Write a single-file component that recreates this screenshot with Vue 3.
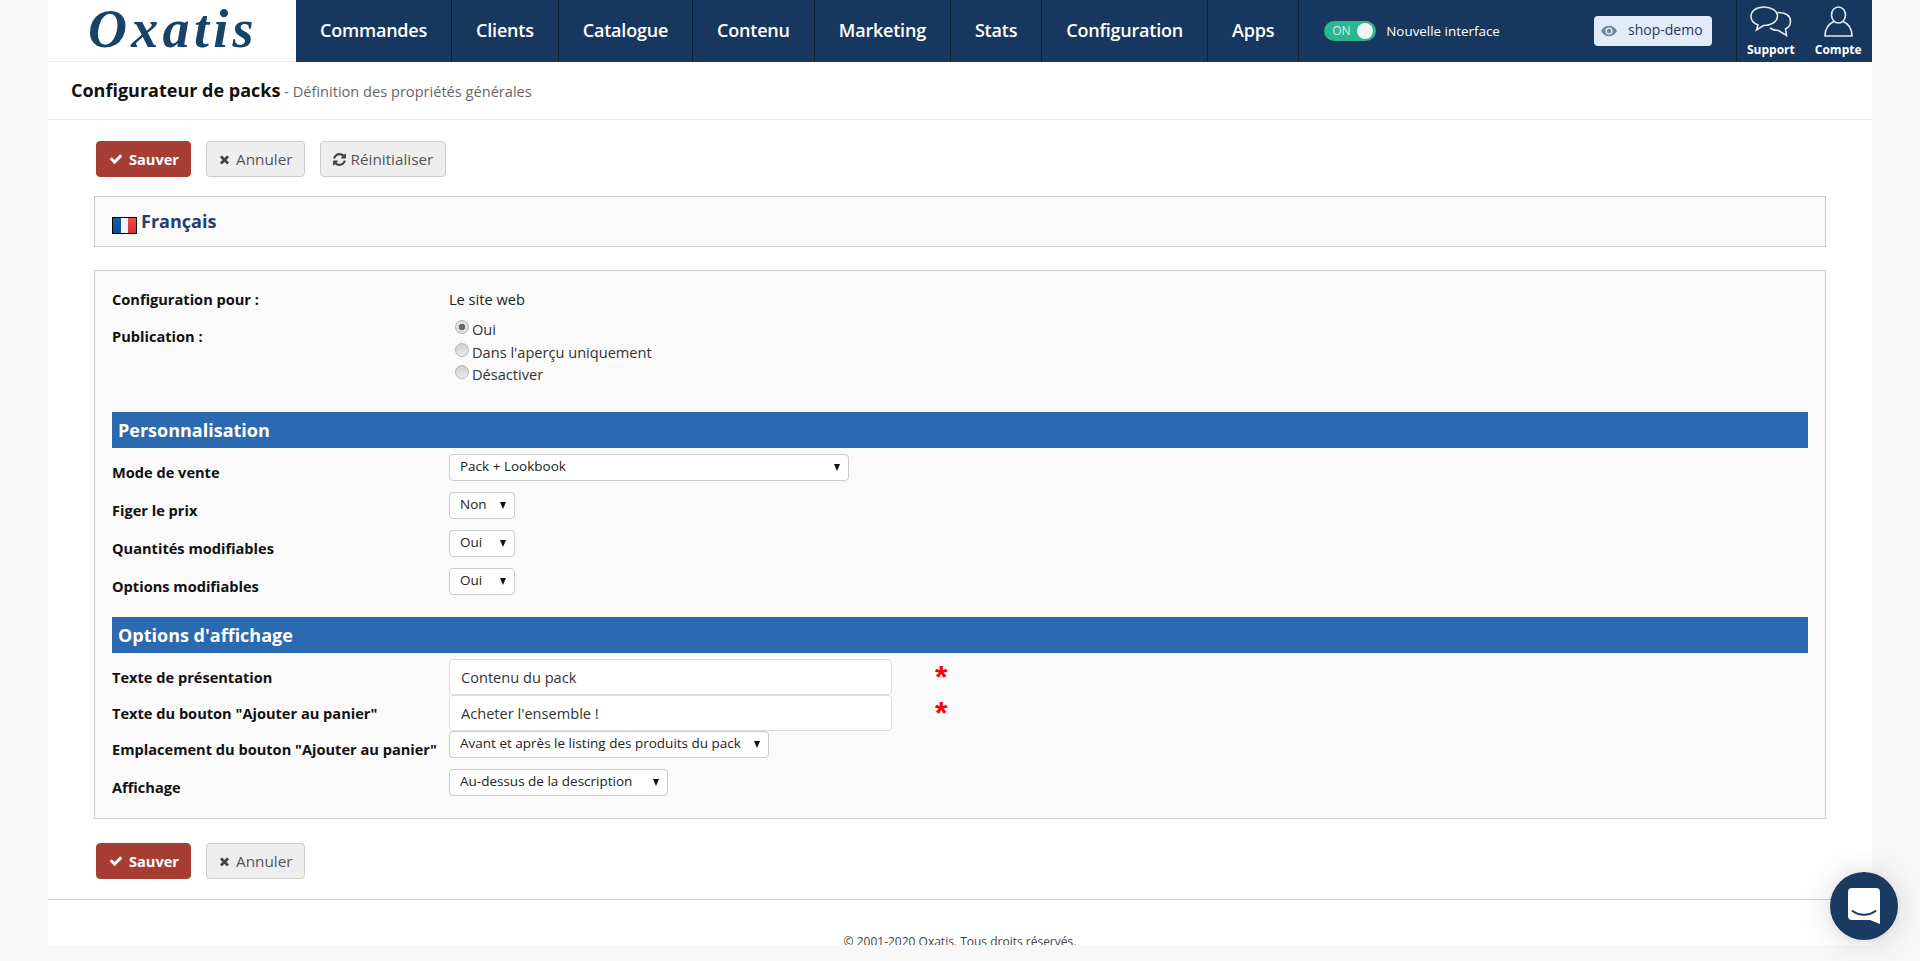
<template>
    <div class="page">
        <header class="topbar">
            <a class="logo">Oxatis</a>
            <nav class="nav">
                <a v-for="item in navItems" :key="item" class="nav-item">{{ item }}</a>
            </nav>
            <div class="tools">
                <span class="toggle"><span class="toggle-on">ON</span><span class="toggle-knob"></span></span>
                <span class="toggle-label">Nouvelle interface</span>
                <a class="shop">
                    <svg class="shop-eye" viewBox="0 0 16 12">
                        <path d="M0 6C2 2.4 4.800 .8 8 .8s6 1.600 8 5.200c-2 3.600-4.800 5.200-8 5.200S2 9.600 0 6z" fill="#6f85a3" />
                        <circle cx="8" cy="6" r="3.600" fill="#e2ebf7" />
                        <circle cx="8" cy="6" r="2.200" fill="#6f85a3" />
                    </svg>
                    shop-demo
                </a>
            </div>
            <div class="account">
                <a class="account-item">
                    <svg class="account-icon support-icon" viewBox="0 0 42 31" fill="none" stroke="#e4e9ef" stroke-width="1.600">
                        <path d="M14 1C6.500 1 1 5 1 10.500c0 4 3 7 7 8.500l-1.500 5 7-4.500c1.500 0 3 0 4.500-.4 6-1.400 9.500-5 9.500-9C27.500 5 21.500 1 14 1z" />
                        <path d="M27.500 6.500c7 0 13 2.500 13 9 0 3.500-2 6-5 7.500l1 6.500-8-5c-3 0-6-.6-8.500-2.500" />
                    </svg>
                    Support
                </a>
                <a class="account-item">
                    <svg class="account-icon user-icon" viewBox="0 0 29 31" fill="none" stroke="#e4e9ef" stroke-width="1.600">
                        <ellipse cx="14.500" cy="9" rx="7" ry="8" />
                        <path d="M10 15.500C5 17.500 1 22 1 30h27c0-8-4-12.500-9-14.500" />
                    </svg>
                    Compte
                </a>
            </div>
        </header>

        <div class="title-bar">
            <span class="title">Configurateur de packs</span>
            <span class="subtitle"> - Définition des propriétés générales</span>
        </div>

        <main class="content">
            <div class="actions">
                <button class="btn btn-save">
                    <svg class="btn-icon" viewBox="0 0 1792 1792"><path :d="icons.check" /></svg>Sauver
                </button>
                <button class="btn">
                    <svg class="btn-icon" viewBox="0 0 1792 1792"><path :d="icons.times" /></svg>Annuler
                </button>
                <button class="btn btn-reset">
                    <svg class="btn-icon" viewBox="0 0 1792 1792"><path :d="icons.refresh" /></svg>Réinitialiser
                </button>
            </div>

            <div class="lang-box">
                <span class="flag"><i class="flag-blue"></i><i class="flag-white"></i><i class="flag-red"></i></span>
                <span class="lang-name">Français</span>
            </div>

            <form class="form-box" @submit.prevent>
                <div class="row row-first">
                    <label class="label">Configuration pour :</label>
                    <span class="value">Le site web</span>
                </div>
                <div class="row row-auto">
                    <label class="label">Publication :</label>
                    <div class="radios">
                        <label v-for="option in publishOptions" :key="option" class="radio">
                            <input type="radio" name="publication" :value="option" v-model="publication">
                            <span>{{ option }}</span>
                        </label>
                    </div>
                </div>

                <h2 class="section section-first">Personnalisation</h2>
                <div v-for="field in saleFields" :key="field.label" class="row">
                    <label class="label">{{ field.label }}</label>
                    <div class="select" :class="field.size">
                        <select><option>{{ field.value }}</option></select>
                    </div>
                </div>

                <h2 class="section">Options d'affichage</h2>
                <div v-for="field in textFields" :key="field.label" class="row row-input">
                    <label class="label">{{ field.label }}</label>
                    <div class="input-wrap">
                        <input class="text-input" type="text" :value="field.value">
                        <span class="required">*</span>
                    </div>
                </div>
                <div v-for="field in displayFields" :key="field.label" class="row">
                    <label class="label">{{ field.label }}</label>
                    <div class="select" :class="field.size">
                        <select><option>{{ field.value }}</option></select>
                    </div>
                </div>
            </form>

            <div class="actions actions-bottom">
                <button class="btn btn-save">
                    <svg class="btn-icon" viewBox="0 0 1792 1792"><path :d="icons.check" /></svg>Sauver
                </button>
                <button class="btn">
                    <svg class="btn-icon" viewBox="0 0 1792 1792"><path :d="icons.times" /></svg>Annuler
                </button>
            </div>
        </main>

        <footer class="footer">© 2001-2020 Oxatis. Tous droits réservés.</footer>

        <button class="chat">
            <svg viewBox="0 0 32 36" width="32" height="36">
                <path d="M4 0h24a4 4 0 0 1 4 4v32l-10-4H4a4 4 0 0 1-4-4V4a4 4 0 0 1 4-4z" fill="#fff" />
                <path d="M4.500 23c7 5 16 5 23 0" fill="none" stroke="#1a3a61" stroke-width="2" stroke-linecap="round" />
            </svg>
        </button>
    </div>
</template>

<script setup>
import { ref } from 'vue';

const navItems = ['Commandes', 'Clients', 'Catalogue', 'Contenu', 'Marketing', 'Stats', 'Configuration', 'Apps'];

const publishOptions = ['Oui', "Dans l'aperçu uniquement", 'Désactiver'];
const publication = ref('Oui');

const saleFields = [
    { label: 'Mode de vente', value: 'Pack + Lookbook', size: 'size-mode' },
    { label: 'Figer le prix', value: 'Non', size: 'size-small' },
    { label: 'Quantités modifiables', value: 'Oui', size: 'size-small' },
    { label: 'Options modifiables', value: 'Oui', size: 'size-small' },
];

const textFields = [
    { label: 'Texte de présentation', value: 'Contenu du pack' },
    { label: 'Texte du bouton "Ajouter au panier"', value: "Acheter l'ensemble !" },
];

const displayFields = [
    { label: 'Emplacement du bouton "Ajouter au panier"', value: 'Avant et après le listing des produits du pack', size: 'size-place' },
    { label: 'Affichage', value: 'Au-dessus de la description', size: 'size-display' },
];

const icons = {
    check: 'M1671 566q0 40-28 68l-724 724-136 136q-28 28-68 28t-68-28l-136-136-362-362q-28-28-28-68t28-68l136-136q28-28 68-28t68 28l294 295 656-657q28-28 68-28t68 28l136 136q28 28 28 68z',
    times: 'M1490 1322q0 40-28 68l-136 136q-28 28-68 28t-68-28l-294-294-294 294q-28 28-68 28t-68-28l-136-136q-28-28-28-68t28-68l294-294-294-294q-28-28-28-68t28-68l136-136q28-28 68-28t68 28l294 294 294-294q28-28 68-28t68 28l136 136q28 28 28 68t-28 68l-294 294 294 294q28 28 28 68z',
    refresh: 'M1639 1056q0 5-1 7-64 268-268 434.500t-478 166.500q-146 0-282.500-55t-243.500-157l-129 129q-19 19-45 19t-45-19-19-45v-448q0-26 19-45t45-19h448q26 0 45 19t19 45-19 45l-137 137q71 66 161 102t187 36q134 0 250-65t186-179q11-17 53-117 8-23 30-23h192q13 0 22.500 9.500t9.500 22.500zm25-800v448q0 26-19 45t-45 19h-448q-26 0-45-19t-19-45 19-45l138-138q-148-137-349-137-134 0-250 65t-186 179q-11 17-53 117-8 23-30 23h-199q-13 0-22.500-9.500t-9.500-22.500v-7q65-268 270-434.500t480-166.500q146 0 284 55.500t245 156.500l130-129q19-19 45-19t45 19 19 45z',
};
</script>

<style>
body {
    background: #f8f8f8;
}
</style>

<style scoped>
.page {
    width: 1824px;
    height: 945px;
    margin: 0 48px;
    background: #fff;
    font-family: "Open Sans", "Liberation Sans", sans-serif;
    font-size: 14.600px;
    color: #333;
}

.topbar {
    display: flex;
    height: 62px;
    background: #17375e;
}

.logo {
    width: 248px;
    height: 62px;
    box-sizing: border-box;
    padding-left: 40px;
    background: #fff;
    border-bottom: 1px solid #e6edf3;
    font-family: "Liberation Serif", serif;
    font-style: italic;
    font-weight: 700;
    font-size: 54px;
    line-height: 58px;
    letter-spacing: 4.300px;
    color: #174368;
}

.nav {
    display: flex;
}

.nav-item {
    padding: 0 24px;
    border-right: 1px solid #0d2035;
    font-size: 18px;
    font-weight: 600;
    line-height: 60px;
    letter-spacing: -.21px;
    color: #fff;
}

.tools {
    display: flex;
    align-items: center;
    flex: 1;
    padding: 0 24px 0 25px;
    border-right: 1px solid #0d2035;
}

.toggle {
    position: relative;
    width: 52px;
    height: 20px;
    border-radius: 10px;
    background: #2db58f;
}

.toggle-on {
    position: absolute;
    left: 8px;
    top: 0;
    font-size: 12px;
    line-height: 20px;
    color: #d7f1e9;
}

.toggle-knob {
    position: absolute;
    right: 3px;
    top: 2px;
    width: 16px;
    height: 16px;
    border-radius: 50%;
    background: #f3f3f3;
}

.toggle-label {
    margin-left: 10px;
    font-size: 13.400px;
    color: #fff;
}

.shop {
    display: flex;
    align-items: center;
    margin-left: auto;
    width: 118px;
    height: 30px;
    box-sizing: border-box;
    padding: 0 0 3px 7px;
    border-radius: 4px;
    background: #e2ebf7;
    font-size: 14px;
    color: #1f3a5f;
}

.shop-eye {
    width: 16px;
    height: 12px;
    margin: 3px 11px 0 0;
}

.account {
    display: flex;
    gap: 20px;
    width: 135px;
    box-sizing: border-box;
    padding-left: 10px;
}

.account-item {
    display: flex;
    flex-direction: column;
    align-items: center;
    font-size: 12px;
    font-weight: 700;
    line-height: 14px;
    color: #fff;
}

.account-icon {
    height: 31px;
    margin: 6px 0 6px;
}

.support-icon {
    width: 42px;
}

.user-icon {
    width: 29px;
}

.title-bar {
    box-sizing: border-box;
    height: 58px;
    padding: 0 23px;
    border-bottom: 1px solid #e6edf3;
    line-height: 56px;
}

.title {
    font-size: 18px;
    font-weight: 700;
    color: #111;
}

.subtitle {
    font-size: 14.600px;
    color: #666;
}

.content {
    padding: 21px 46px 20px;
    border-bottom: 1px solid #ccc;
}

.actions {
    display: flex;
    gap: 15px;
    margin-left: 2px;
}

.actions-bottom {
    margin-top: 24px;
}

.btn {
    display: flex;
    align-items: center;
    height: 36px;
    box-sizing: border-box;
    padding: 0 11px;
    border: 1px solid #ccc;
    border-radius: 4px;
    background: #eee;
    font-family: inherit;
    font-size: 15.300px;
    color: #555;
}

.btn-reset {
    padding-right: 12px;
}

.btn-reset .btn-icon {
    width: 15px;
    height: 15px;
    margin-right: 4px;
}

.btn-save {
    padding: 0 11px 0 12px;
    border-color: #a63e33;
    background: #a63e33;
    font-size: 14.600px;
    font-weight: 700;
    color: #fff;
}

.btn-icon {
    width: 13px;
    height: 13px;
    margin-right: 5px;
    fill: #444;
}

.btn-save .btn-icon {
    width: 14px;
    height: 14px;
    margin-right: 6px;
    fill: #fff;
}

.lang-box {
    display: flex;
    align-items: center;
    height: 51px;
    box-sizing: border-box;
    margin-top: 19px;
    padding: 0 0 2px 17px;
    border: 1px solid #ccc;
    background: #fafafa;
}

.flag {
    display: flex;
    width: 25px;
    height: 17px;
    box-sizing: border-box;
    margin: 10px 4px 0 0;
    border: 1px solid #000;
}

.flag i {
    flex: 1;
}

.flag-blue {
    background: linear-gradient(#1b5aa8, #0f4a95);
}

.flag-white {
    background: #f4f4f4;
}

.flag-red {
    background: linear-gradient(#ee4b4b, #d92f35);
}

.lang-name {
    font-size: 18px;
    font-weight: 700;
    color: #1f3f6d;
}

.form-box {
    height: 549px;
    box-sizing: border-box;
    margin-top: 23px;
    padding: 10px 17px 0;
    border: 1px solid #ccc;
    background: #fafafa;
}

.row {
    display: grid;
    grid-template-columns: 337px 1fr;
    height: 38px;
}

.row-first {
    height: 37px;
}

.row-auto {
    height: auto;
}

.row-input {
    height: 36px;
}

.label {
    font-weight: 700;
    line-height: 37px;
    color: #111;
    white-space: nowrap;
}

.value {
    line-height: 37px;
    color: #222;
}

.radios {
    padding-left: 6px;
}

.radio {
    display: flex;
    align-items: center;
    height: 22.500px;
    color: #333;
}

.radio input {
    appearance: none;
    width: 14px;
    height: 14px;
    margin: -4px 3px 0 0;
    border: 1px solid #b4b4b4;
    border-radius: 50%;
    background: linear-gradient(#cfcfcf, #ececec);
}

.radio input:checked {
    background: radial-gradient(circle, #666 0 3px, #dedede 3.500px);
}

.section {
    height: 36px;
    margin: 11px 0 6px;
    padding-left: 6px;
    background: #2b69b0;
    font-size: 18px;
    font-weight: 700;
    line-height: 36px;
    color: #fff;
}

.section-first {
    margin-top: 26px;
}

.select {
    position: relative;
    height: 27px;
}

.select::after {
    content: "";
    position: absolute;
    right: 9px;
    top: 10px;
    border-top: 7px solid #111;
    border-left: 3.500px solid transparent;
    border-right: 3.500px solid transparent;
}

.select select {
    appearance: none;
    display: block;
    width: 100%;
    height: 100%;
    padding: 0 0 2px 10px;
    box-sizing: border-box;
    border: 1px solid #ccc;
    border-radius: 4px;
    background: #fff;
    font-family: inherit;
    font-size: 13.500px;
    color: #222;
}

.size-mode {
    width: 400px;
}

.size-small {
    width: 66px;
}

.size-place {
    width: 320px;
}

.size-display {
    width: 219px;
}

.input-wrap {
    display: flex;
    gap: 43px;
}

.text-input {
    width: 443px;
    height: 36px;
    box-sizing: border-box;
    padding: 0 11px;
    border: 1px solid #ddd;
    border-radius: 4px;
    background: #fff;
    font-family: inherit;
    font-size: 14.600px;
    color: #333;
}

.required {
    font-family: "Liberation Sans", sans-serif;
    font-size: 32px;
    font-weight: 700;
    line-height: 36px;
    color: #f00;
}

.footer {
    padding-top: 33px;
    font-size: 12px;
    line-height: 18px;
    color: #444;
    text-align: center;
}

.chat {
    position: fixed;
    left: 1830px;
    top: 872px;
    display: flex;
    align-items: center;
    justify-content: center;
    width: 68px;
    height: 68px;
    padding: 0;
    border: none;
    border-radius: 50%;
    background: #1a3a61;
    box-shadow: 0 1px 6px rgba(0, 0, 0, .06), 0 2px 32px rgba(0, 0, 0, .16);
}
</style>
